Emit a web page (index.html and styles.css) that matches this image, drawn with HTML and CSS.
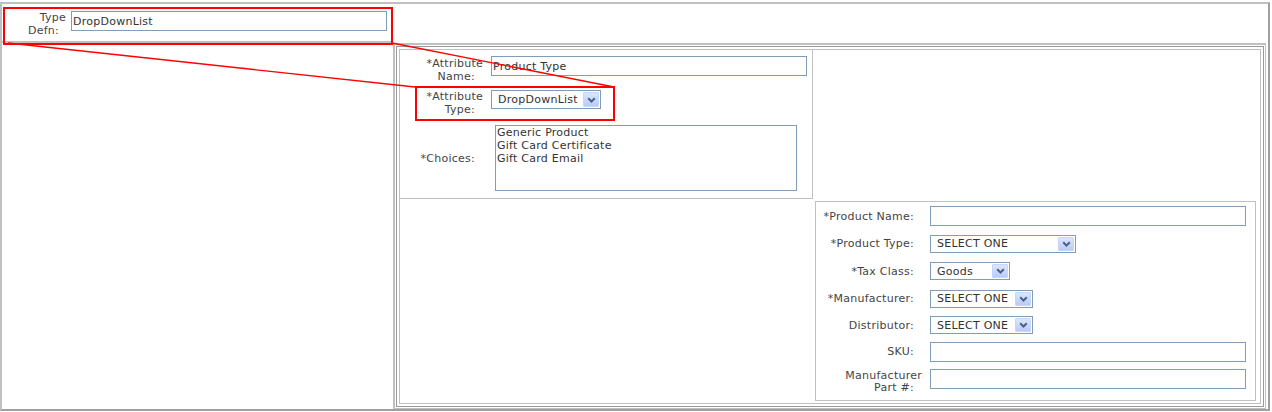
FILE: index.html
```html
<!DOCTYPE html>
<html lang="en">
<head>
<meta charset="utf-8">
<title>Attribute definition</title>
<link rel="stylesheet" href="styles.css">
</head>
<body>
<div class="frame">
  <div class="defn-cell">
    <div class="label"><span class="ln">Type</span><span class="ln last">Defn:</span></div>
    <input class="text w316" type="text" value="DropDownList">
  </div>
  <div class="panel-b">
    <div class="panel-c">
      <div class="panel-d">
        <div class="attr-box">
          <div class="row r1">
            <div class="label"><span class="ln">*Attribute</span><span class="ln last">Name:</span></div>
            <input class="text w316" type="text" value="Product Type">
          </div>
          <div class="row r2">
            <div class="label"><span class="ln">*Attribute</span><span class="ln last">Type:</span></div>
            <div class="select tall w110"><span class="val">DropDownList</span><span class="btn"><svg width="9" height="6" viewBox="0 0 9 6"><path d="M1.2 1.2 L4.5 4.5 L7.8 1.2" fill="none" stroke="#4d6185" stroke-width="2"/></svg></span></div>
          </div>
          <div class="row r3">
            <div class="label"><span class="ln last">*Choices:</span></div>
            <textarea class="choices">Generic Product
Gift Card Certificate
Gift Card Email</textarea>
          </div>
        </div>
        <div class="product-box">
          <div class="prow">
            <div class="label"><span class="ln last">*Product Name:</span></div>
            <input class="text w316" type="text" value="">
          </div>
          <div class="prow">
            <div class="label"><span class="ln last">*Product Type:</span></div>
            <div class="select w146"><span class="val">SELECT ONE</span><span class="btn"><svg width="9" height="6" viewBox="0 0 9 6"><path d="M1.2 1.2 L4.5 4.5 L7.8 1.2" fill="none" stroke="#4d6185" stroke-width="2"/></svg></span></div>
          </div>
          <div class="prow">
            <div class="label"><span class="ln last">*Tax Class:</span></div>
            <div class="select w80"><span class="val">Goods</span><span class="btn"><svg width="9" height="6" viewBox="0 0 9 6"><path d="M1.2 1.2 L4.5 4.5 L7.8 1.2" fill="none" stroke="#4d6185" stroke-width="2"/></svg></span></div>
          </div>
          <div class="prow">
            <div class="label"><span class="ln last">*Manufacturer:</span></div>
            <div class="select w103"><span class="val">SELECT ONE</span><span class="btn"><svg width="9" height="6" viewBox="0 0 9 6"><path d="M1.2 1.2 L4.5 4.5 L7.8 1.2" fill="none" stroke="#4d6185" stroke-width="2"/></svg></span></div>
          </div>
          <div class="prow">
            <div class="label"><span class="ln last">Distributor:</span></div>
            <div class="select w103"><span class="val">SELECT ONE</span><span class="btn"><svg width="9" height="6" viewBox="0 0 9 6"><path d="M1.2 1.2 L4.5 4.5 L7.8 1.2" fill="none" stroke="#4d6185" stroke-width="2"/></svg></span></div>
          </div>
          <div class="prow">
            <div class="label"><span class="ln last">SKU:</span></div>
            <input class="text w316" type="text" value="">
          </div>
          <div class="prow top">
            <div class="label"><span class="ln">Manufacturer</span><span class="ln last">Part #:</span></div>
            <input class="text w316" type="text" value="">
          </div>
        </div>
      </div>
    </div>
  </div>
</div>
<div class="annot box1"></div>
<div class="annot box2"></div>
<svg class="annot-lines" width="1272" height="412" viewBox="0 0 1272 412">
  <line x1="8" y1="43" x2="415" y2="87" stroke="#ff0000" stroke-width="1.4"/>
  <line x1="392" y1="43" x2="614" y2="87" stroke="#ff0000" stroke-width="1.4"/>
</svg>
</body>
</html>
```

FILE: styles.css
```css
* { box-sizing: border-box; }

html, body {
  margin: 0;
  padding: 0;
  background: #ffffff;
}

body {
  position: relative;
  width: 1272px;
  height: 412px;
  overflow: hidden;
  font-family: "DejaVu Sans", Verdana, sans-serif;
  font-size: 11px;
  line-height: 13px;
  letter-spacing: 0.25px;
  color: #444444;
}

.frame {
  margin-top: 2px;
  width: 1270px;
  height: 409px;
  border-style: solid;
  border-width: 2px;
  border-color: #c0c0c0 #a0a0a0 #a0a0a0 #c0c0c0;
  display: grid;
  grid-template-columns: 391px 1fr;
  grid-template-rows: 39px 1fr;
}

/* labels */
.label {
  flex: none;
  text-align: right;
}
.label .ln { display: block; white-space: nowrap; }
.label .last { padding-right: 8px; }

/* text inputs */
.text {
  display: block;
  height: 20px;
  margin: 0;
  padding: 0 1px;
  border: 1px solid #7f9db9;
  background: #ffffff;
  font: inherit;
  letter-spacing: inherit;
  color: #333333;
  outline: none;
}
.w316 { width: 316px; }

/* xp style combo */
.select {
  display: flex;
  align-items: center;
  justify-content: space-between;
  height: 18px;
  padding: 0 1px 0 6px;
  border: 1px solid #7f9db9;
  background: #ffffff;
  color: #333333;
  white-space: nowrap;
}
.select.tall { height: 19px; }
.select .btn {
  display: flex;
  align-items: center;
  justify-content: center;
  width: 16px;
  height: 14px;
  border: 1px solid #c6d5fb;
  border-radius: 1px;
  background: linear-gradient(#dbe5fd, #b9cbf7);
}
.select.tall .btn { height: 15px; }
.w110 { width: 110px; }
.w146 { width: 146px; }
.w80 { width: 80px; }
.w103 { width: 103px; }

/* top cell */
.defn-cell {
  grid-column: 1;
  grid-row: 1;
  display: flex;
  align-items: flex-start;
  gap: 5px;
  padding-top: 7px;
  border-bottom: 2px solid #c0c0c0;
}
.defn-cell .label { width: 64px; }
.defn-cell .last { padding-right: 7px; }

/* nested panel frames */
.panel-b {
  grid-column: 2;
  grid-row: 2;
  margin-right: 2px;
  display: flex;
  padding: 1px;
  border-style: solid;
  border-width: 2px 1px 1px 2px;
  border-color: #c0c0c0;
}
.panel-c {
  flex: 1;
  display: flex;
  padding: 2px;
  border: 1px solid #999999;
}
.panel-d {
  flex: 1;
  display: grid;
  grid-template-columns: 413px 1fr;
  grid-template-rows: 149px 1fr;
  border: 1px solid #c0c0c0;
}

/* attribute box */
.attr-box {
  grid-column: 1;
  grid-row: 1;
  padding-top: 6px;
  border-right: 1px solid #c0c0c0;
  border-bottom: 1px solid #c0c0c0;
}
.attr-box .row {
  display: flex;
  align-items: flex-start;
  gap: 8px;
}
.attr-box .label { width: 83px; }
.attr-box .r1 { height: 26px; margin-bottom: 8px; }
.attr-box .r1 .label { padding-top: 1px; }
.attr-box .r2 { height: 26px; margin-bottom: 9px; }
.attr-box .r3 { align-items: center; }

.choices {
  display: block;
  width: 302px;
  height: 66px;
  margin: 0 0 0 4px;
  padding: 0 1px;
  border: 1px solid #7f9db9;
  font: inherit;
  letter-spacing: inherit;
  line-height: 13px;
  color: #333333;
  resize: none;
  overflow: hidden;
  outline: none;
}

/* product box */
.product-box {
  grid-column: 2;
  grid-row: 2;
  margin: 2px 4px 2px 2px;
  border: 1px solid #c0c0c0;
  display: grid;
  grid-template-rows: 28px 27px 28px 27px 26px 27px 1fr;
}
.prow {
  display: flex;
  align-items: center;
  gap: 8px;
}
.prow .label { width: 106px; }
.prow.top { align-items: flex-start; }
.prow.top .text { margin-top: 4px; }
.prow.top .label { margin-top: 5px; line-height: 12px; }

/* red annotation overlay */
.annot {
  position: absolute;
  border: 2px solid #ff0000;
  pointer-events: none;
}
.box1 { left: 3px; top: 7px; width: 390px; height: 38px; }
.box2 { left: 415px; top: 86px; width: 200px; height: 35px; }
.annot-lines {
  position: absolute;
  left: 0;
  top: 0;
  pointer-events: none;
}
```
